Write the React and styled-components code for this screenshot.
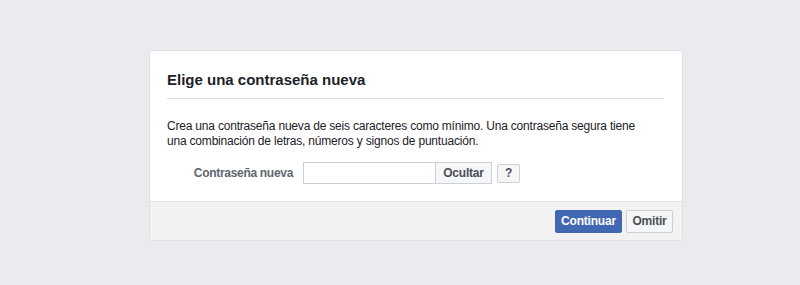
import React from 'react'
import styled, { createGlobalStyle } from 'styled-components'

const GlobalStyle = createGlobalStyle`
  html, body {
    margin: 0;
    padding: 0;
    background: #e9ebee;
    font-family: "Liberation Sans", Arial, sans-serif;
  }
`

const Page = styled.div`
  width: 800px;
  height: 285px;
  padding: 50px 0 0 149px;
  box-sizing: border-box;
`

const Card = styled.div`
  width: 534px;
  background: #fff;
  border: 1px solid #dddfe2;
  border-radius: 3px;
  box-sizing: border-box;
  overflow: hidden;
`

const Header = styled.div`
  margin: 0 18px 0 17px;
  padding: 21px 0 11px;
  border-bottom: 1px solid #dddfe2;
`

const Title = styled.h2`
  margin: 0;
  font-size: 15px;
  line-height: 15px;
  font-weight: bold;
  color: #1d2129;
`

const Body = styled.div`
  padding: 20px 17px 17px;
`

const Text = styled.p`
  margin: 0 0 13px;
  font-size: 12px;
  line-height: 15px;
  letter-spacing: -0.2px;
  color: #1d2129;
`

const Row = styled.div`
  display: flex;
  align-items: center;
`

const Label = styled.label`
  width: 126px;
  padding-right: 10px;
  text-align: right;
  font-size: 12px;
  font-weight: bold;
  letter-spacing: -0.3px;
  color: #606770;
`

const Input = styled.input`
  width: 132px;
  height: 22px;
  box-sizing: border-box;
  border: 1px solid #ccd0d5;
  border-right: none;
  border-radius: 0;
  outline: none;
  padding: 3px;
  font-family: inherit;
  font-size: 12px;
`

const GreyButton = styled.button`
  width: ${p => p.$w}px;
  height: ${p => p.$h || 22}px;
  margin-left: ${p => p.$gap || 0}px;
  padding: 0;
  box-sizing: border-box;
  border: 1px solid #ccd0d5;
  border-radius: ${p => p.$radius || 0}px;
  background: #f5f6f7;
  color: #4b4f56;
  font-family: inherit;
  font-size: 12px;
  font-weight: bold;
  letter-spacing: -0.2px;
  cursor: pointer;
`

const Footer = styled.div`
  display: flex;
  justify-content: flex-end;
  align-items: center;
  gap: 4px;
  height: 38px;
  padding: 0 9px 0 0;
  background: #f2f2f2;
  border-top: 1px solid #dddfe2;
`

const FooterButton = styled.button`
  width: ${p => p.$w}px;
  height: 23px;
  padding: 0;
  box-sizing: border-box;
  border: 1px solid ${p => (p.$primary ? '#4267b2' : '#ccd0d5')};
  border-radius: 2px;
  background: ${p => (p.$primary ? '#4267b2' : '#f5f6f7')};
  color: ${p => (p.$primary ? '#fff' : '#4b4f56')};
  font-family: inherit;
  font-size: 12px;
  font-weight: bold;
  letter-spacing: -0.2px;
  cursor: pointer;
`

export default function App() {
  return (
    <>
      <GlobalStyle />
      <Page>
        <Card>
          <Header>
            <Title>Elige una contraseña nueva</Title>
          </Header>
          <Body>
            <Text>
              Crea una contraseña nueva de seis caracteres como mínimo. Una contraseña segura tiene
              <br />
              una combinación de letras, números y signos de puntuación.
            </Text>
            <Row>
              <Label>Contraseña nueva</Label>
              <Input type="password" />
              <GreyButton $w={57}>Ocultar</GreyButton>
              <GreyButton $w={23} $gap={5} $h={19} $radius={2}>?</GreyButton>
            </Row>
          </Body>
          <Footer>
            <FooterButton $primary $w={67}>Continuar</FooterButton>
            <FooterButton $w={47}>Omitir</FooterButton>
          </Footer>
        </Card>
      </Page>
    </>
  )
}
